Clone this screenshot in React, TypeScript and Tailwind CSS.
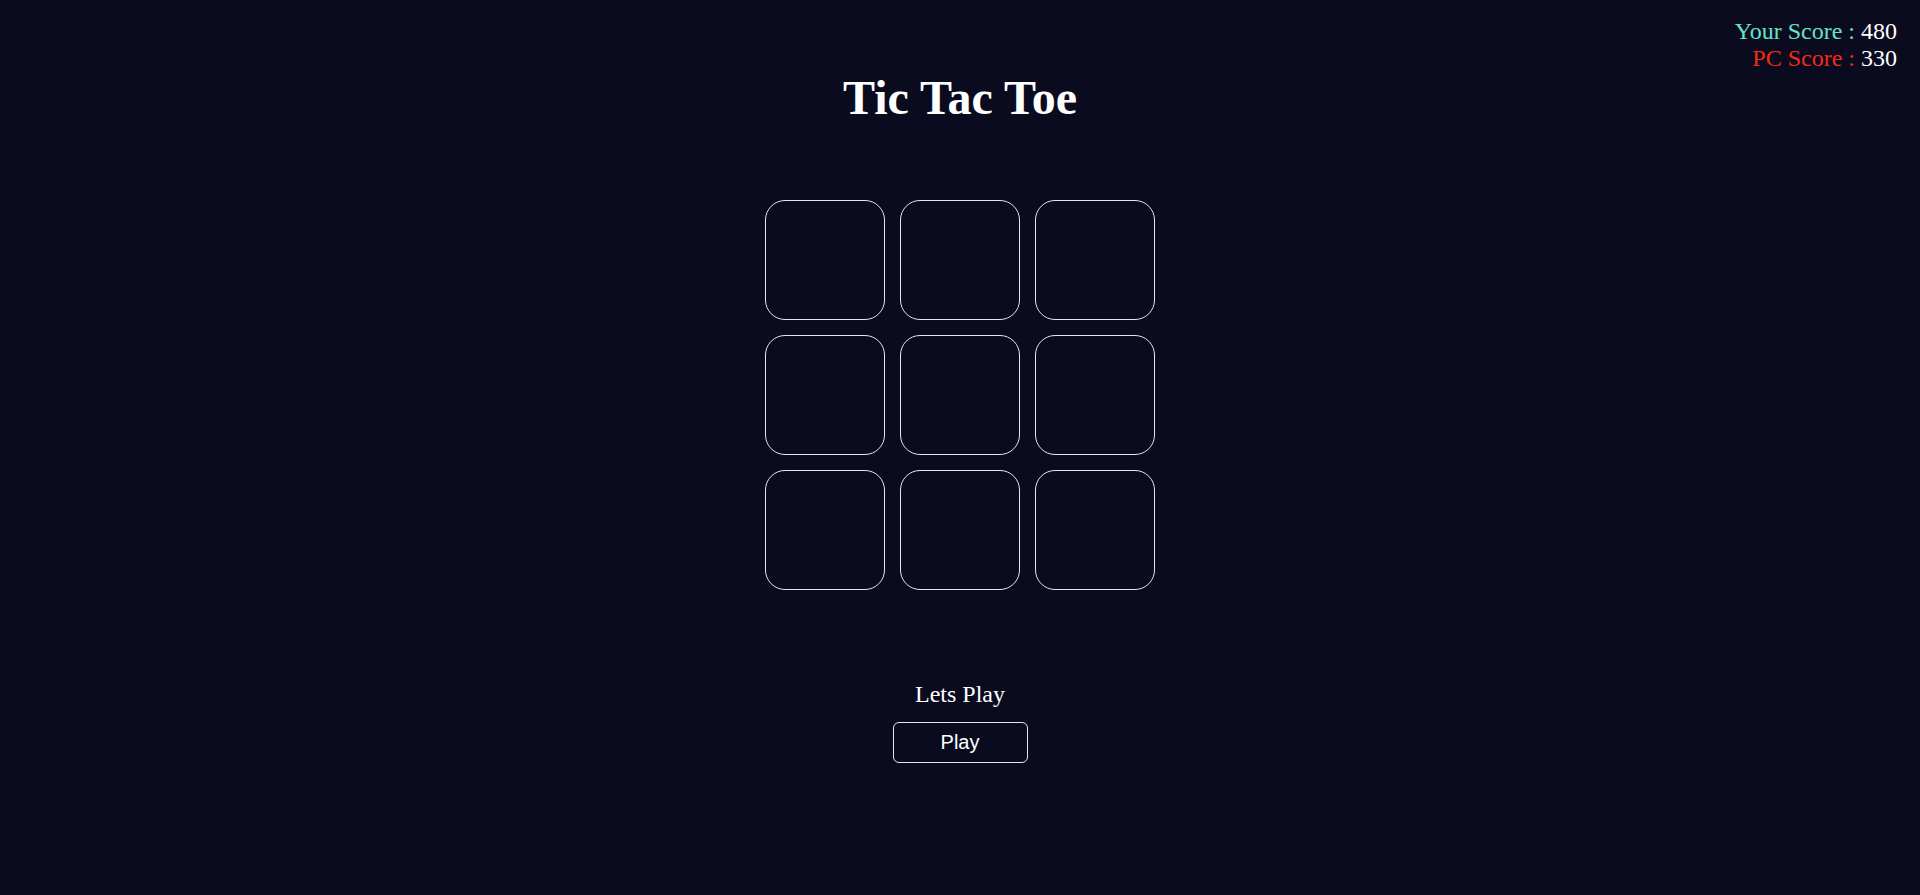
export default function App() {
  const cells = Array.from({ length: 9 }, (_, i) => i)

  return (
    <div className="relative min-h-[895px] w-full bg-[#0b0b20] font-['Liberation_Serif',serif] text-white">
      {/* Scores */}
      <div className="absolute right-[23px] top-[18px] text-right text-[24px] leading-[27px]">
        <div>
          <span className="text-[#66e3c4]">Your Score : </span>
          <span>480</span>
        </div>
        <div>
          <span className="text-[#f42a12]">PC Score : </span>
          <span>330</span>
        </div>
      </div>

      <div className="flex flex-col items-center pt-[71px]">
        <h1 className="text-[48px] font-bold leading-[53px]">Tic Tac Toe</h1>

        <div className="mt-[76px] grid grid-cols-[repeat(3,120px)] gap-[15px]">
          {cells.map((i) => (
            <button
              key={i}
              className="h-[120px] w-[120px] rounded-[20px] border border-[#e6e6ea] bg-transparent"
            />
          ))}
        </div>

        <p className="mt-[90px] text-[24px] leading-[28px]">Lets Play</p>

        <button className="mt-[14px] h-[41px] w-[135px] rounded-[6px] border border-[#e6e6ea] pb-[1px] font-['Liberation_Sans',Arial,sans-serif] text-[20px] text-white">
          Play
        </button>
      </div>
    </div>
  )
}
